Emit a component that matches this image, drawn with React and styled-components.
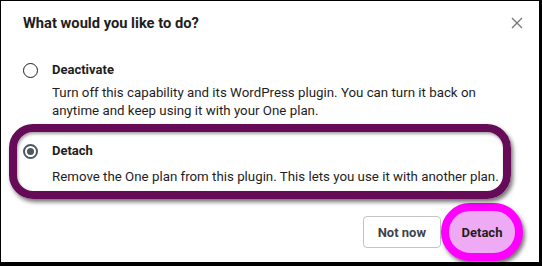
import React from 'react';
import styled, { createGlobalStyle } from 'styled-components';

const GlobalStyle = createGlobalStyle`
  html, body {
    margin: 0;
    padding: 0;
    background: #000;
  }
  body {
    font-family: Roboto, "Noto Sans", "Liberation Sans", sans-serif;
    -webkit-font-smoothing: antialiased;
  }
`;

const Frame = styled.div`
  width: 542px;
  height: 266px;
  padding: 1px 3px 4px 1px;
  box-sizing: border-box;
  background: #000;
`;

const Dialog = styled.div`
  height: 100%;
  background: #fff;
  display: flex;
  flex-direction: column;
  color: #1e1e1e;
`;

const Header = styled.div`
  display: flex;
  align-items: center;
  justify-content: space-between;
  padding: 11px 16px 0 22px;
  height: 22px;
`;

const Title = styled.h1`
  margin: 0;
  font-size: 14.7px;
  font-weight: 700;
  line-height: 22px;
`;

const CloseButton = styled.button`
  border: 0;
  background: none;
  padding: 0;
  width: 12px;
  height: 12px;
  display: flex;
  cursor: pointer;
`;

const Options = styled.div`
  display: flex;
  flex-direction: column;
  gap: 22px;
  padding: 27px 0 0 22px;
`;

const Option = styled.label`
  position: relative;
  display: grid;
  grid-template-columns: 15px 1fr;
  column-gap: 14px;
  font-size: 13.3px;
  line-height: 18px;

  ${(p) =>
    p.$highlight &&
    `
    &::before {
      content: '';
      position: absolute;
      left: -14px;
      top: -18px;
      right: 28px;
      bottom: -13px;
      border: 8px solid #660b57;
      border-radius: 24px;
      box-shadow: 2px 3px 4px rgba(0, 0, 0, 0.55), inset 1px 2px 3px rgba(0, 0, 0, 0.35);
      pointer-events: none;
    }
  `}
`;

const Radio = styled.span`
  width: 15px;
  height: 15px;
  box-sizing: border-box;
  border-radius: 50%;
  border: ${(p) => (p.$checked ? '2px solid #50575e' : '1.5px solid #1e1e1e')};
  margin-top: 2px;
  display: flex;
  align-items: center;
  justify-content: center;

  &::after {
    content: '';
    display: ${(p) => (p.$checked ? 'block' : 'none')};
    width: 7px;
    height: 7px;
    border-radius: 50%;
    background: #50575e;
  }
`;

const Label = styled.div`
  font-weight: 700;
  font-size: 13px;
  margin-bottom: ${(p) => p.$gap}px;
`;

const Description = styled.div`
  width: 460px;
`;

const Footer = styled.div`
  margin-top: auto;
  display: flex;
  justify-content: flex-end;
  align-items: center;
  padding: 0 16px 1px 0;
`;

const Button = styled.button`
  font-family: inherit;
  font-size: 13px;
  font-weight: 700;
  color: #3c434a;
  background: #fff;
  border: 1px solid #c3c4c7;
  border-radius: 4px;
  height: 32px;
  padding: 0 14px;
  cursor: pointer;
`;

const PrimaryButton = styled.button`
  font-family: inherit;
  font-size: 13px;
  font-weight: 700;
  color: #1e1e1e;
  background: #efaaf6;
  border: 8px solid #ff00ff;
  border-radius: 30px;
  width: 82px;
  height: 58px;
  box-shadow: 2px 3px 4px rgba(0, 0, 0, 0.55);
  cursor: pointer;
`;

function Choice({ title, text, checked, highlight, gap }) {
  return (
    <Option $highlight={highlight}>
      <Radio $checked={checked} />
      <div>
        <Label $gap={gap}>{title}</Label>
        <Description>{text}</Description>
      </div>
    </Option>
  );
}

export default function App() {
  return (
    <>
      <GlobalStyle />
      <Frame>
        <Dialog>
          <Header>
            <Title>What would you like to do?</Title>
            <CloseButton aria-label="Close">
              <svg width="12" height="12" viewBox="0 0 12 12">
                <path d="M1 1L11 11M11 1L1 11" stroke="#757575" strokeWidth="1.3" />
              </svg>
            </CloseButton>
          </Header>
          <Options>
            <Choice
              title="Deactivate"
              gap={5}
              text="Turn off this capability and its WordPress plugin. You can turn it back on anytime and keep using it with your One plan."
            />
            <Choice
              title="Detach"
              checked
              highlight
              gap={8}
              text="Remove the One plan from this plugin. This lets you use it with another plan."
            />
          </Options>
          <Footer>
            <Button>Not now</Button>
            <PrimaryButton>Detach</PrimaryButton>
          </Footer>
        </Dialog>
      </Frame>
    </>
  );
}
